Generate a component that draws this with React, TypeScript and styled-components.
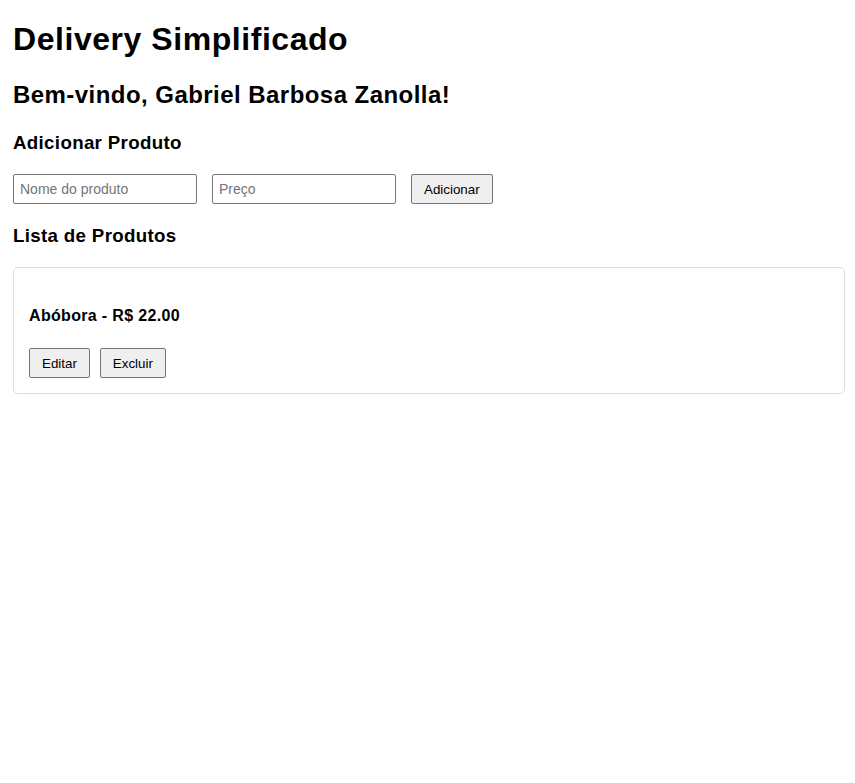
import React from "react";
import styled, { createGlobalStyle } from "styled-components";

const GlobalStyle = createGlobalStyle`
  html, body {
    margin: 0;
    padding: 0;
    background: #ffffff;
  }
  body {
    font-family: "Liberation Sans", Arial, sans-serif;
    color: #000000;
  }
`;

const Page = styled.div`
  padding: 21px 10px 0 13px;
  display: flex;
  flex-direction: column;
`;

const Title = styled.h1`
  margin: 0 0 23px 0;
  font-size: 32px;
  font-weight: bold;
  line-height: 37px;
  letter-spacing: 0.55px;
`;

const Welcome = styled.h2`
  margin: 0 0 23px 0;
  font-size: 24px;
  font-weight: bold;
  line-height: 28px;
  letter-spacing: 0.45px;
`;

const SectionTitle = styled.h3<{ $after: number }>`
  margin: 0 0 ${(p) => p.$after}px 0;
  font-size: 18.72px;
  font-weight: bold;
  line-height: 22px;
  letter-spacing: 0.33px;
`;

const FormRow = styled.div`
  display: flex;
  gap: 15px;
  margin-bottom: 21px;
`;

const TextInput = styled.input`
  box-sizing: border-box;
  width: 184px;
  height: 30px;
  padding: 6px;
  border: 1px solid #767676;
  border-radius: 2px;
  font-family: "Liberation Sans", Arial, sans-serif;
  font-size: 14px;
  color: #000;
  background: #fff;
  &::placeholder {
    color: #757575;
  }
`;

const Button = styled.button`
  box-sizing: border-box;
  height: 30px;
  padding: 0 12px;
  border: 1px solid #767676;
  border-radius: 2px;
  background: #efefef;
  font-family: "Liberation Sans", Arial, sans-serif;
  font-size: 13.33px;
  color: #000;
  cursor: pointer;
`;

const Card = styled.div`
  border: 1px solid #dddddd;
  border-radius: 5px;
  padding: 16px 15px 15px 15px;
  display: flex;
  flex-direction: column;
`;

const ProductName = styled.h4`
  margin: 23px 0 23px 0;
  font-size: 16px;
  font-weight: bold;
  line-height: 18px;
  letter-spacing: 0.33px;
`;

const Actions = styled.div`
  display: flex;
  gap: 10px;
`;

export default function App() {
  return (
    <>
      <GlobalStyle />
      <Page>
        <Title>Delivery Simplificado</Title>
        <Welcome>Bem-vindo, Gabriel Barbosa Zanolla!</Welcome>
        <SectionTitle $after={20}>Adicionar Produto</SectionTitle>
        <FormRow>
          <TextInput placeholder="Nome do produto" />
          <TextInput placeholder="Preço" />
          <Button>Adicionar</Button>
        </FormRow>
        <SectionTitle $after={20}>Lista de Produtos</SectionTitle>
        <Card>
          <ProductName>Abóbora - R$ 22.00</ProductName>
          <Actions>
            <Button>Editar</Button>
            <Button>Excluir</Button>
          </Actions>
        </Card>
      </Page>
    </>
  );
}
